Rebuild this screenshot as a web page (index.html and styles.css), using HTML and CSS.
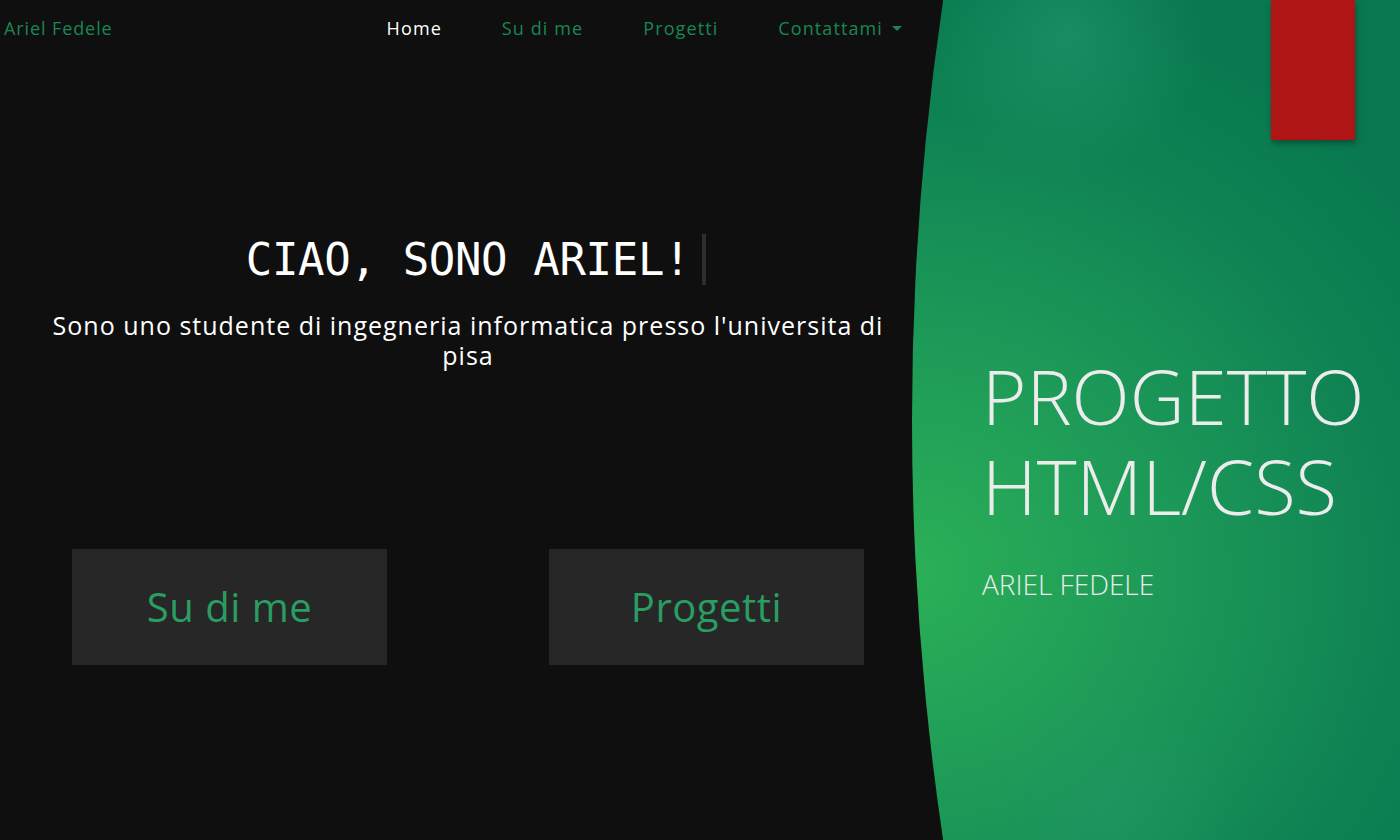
FILE: index.html
```html
<!DOCTYPE html>
<html lang="it">
<head>
<meta charset="utf-8">
<title>Ariel Fedele</title>
<link rel="stylesheet" href="styles.css">
</head>
<body>
<div class="page">
  <div class="main">
    <nav class="navbar">
      <a class="brand" href="#">Ariel Fedele</a>
      <ul class="nav-links">
        <li><a class="nav-link active" href="#">Home</a></li>
        <li><a class="nav-link" href="#">Su di me</a></li>
        <li><a class="nav-link" href="#">Progetti</a></li>
        <li><a class="nav-link dropdown" href="#">Contattami</a></li>
      </ul>
    </nav>
    <section class="hero">
      <h1 class="hero-title"><span class="typing">CIAO, SONO ARIEL!</span></h1>
      <p class="hero-text">Sono uno studente di ingegneria informatica presso l'universita di pisa</p>
      <div class="hero-buttons">
        <a class="big-btn" href="#">Su di me</a>
        <a class="big-btn" href="#">Progetti</a>
      </div>
    </section>
  </div>
  <div class="visual">
    <div class="ribbon"></div>
    <div class="visual-text">
      <div class="visual-line">PROGETTO</div>
      <div class="visual-line">HTML/CSS</div>
      <div class="visual-sub">ARIEL FEDELE</div>
    </div>
  </div>
</div>
</body>
</html>
```
FILE: styles.css
```css
html, body {
  margin: 0;
  padding: 0;
  background: #0f0f0f;
  overflow: hidden;
}
body {
  font-family: "Open Sans", "Noto Sans", sans-serif;
  color: #ffffff;
}
a { text-decoration: none; }

.page {
  display: flex;
  width: 1400px;
  height: 840px;
}

.main {
  width: 936px;
  flex: 0 0 936px;
  display: flex;
  flex-direction: column;
}

.navbar {
  height: 56px;
  display: flex;
  align-items: center;
  padding: 0 4px;
}
.brand {
  color: #198754;
  font-size: 18px;
  letter-spacing: 0.9px;
}
.nav-links {
  list-style: none;
  margin: 0 0 0 auto;
  padding: 0;
  display: flex;
}
.nav-link {
  display: block;
  padding: 0 30px;
  font-size: 18px;
  letter-spacing: 1.1px;
  color: #198754;
}
.nav-link.active { color: #ffffff; }
.dropdown::after {
  content: "";
  display: inline-block;
  margin-left: 9px;
  vertical-align: 4px;
  border-top: 5px solid #198754;
  border-left: 5px solid transparent;
  border-right: 5px solid transparent;
}

.hero {
  display: flex;
  flex-direction: column;
  align-items: center;
  padding-top: 178px;
}
.hero-title {
  margin: 0 0 0 16px;
  font-family: "DejaVu Sans Mono", monospace;
  font-weight: 400;
  font-size: 44px;
  letter-spacing: -0.35px;
  line-height: 1.2;
  color: #ffffff;
}
.typing {
  padding-right: 12px;
  border-right: 4px solid #2e2e2e;
}
.hero-text {
  margin: 23px 0 0;
  width: 870px;
  text-align: center;
  font-size: 25px;
  letter-spacing: 1px;
  line-height: 30px;
}
.hero-buttons {
  margin-top: 179px;
  display: flex;
  gap: 162px;
}
.big-btn {
  width: 315px;
  height: 116px;
  background: #272727;
  color: #2a9d63;
  font-size: 40px;
  letter-spacing: 0.5px;
  display: flex;
  align-items: center;
  justify-content: center;
}

.visual {
  flex: 1;
  margin-left: -24px;
  position: relative;
  clip-path: circle(2845px at 2845px 420px);
  background:
    radial-gradient(circle 140px at 155px 35px, rgba(50, 165, 125, 0.4), rgba(50, 165, 125, 0)),
    radial-gradient(circle 120px at 200px 810px, rgba(40, 150, 110, 0.35), rgba(40, 150, 110, 0)),
    radial-gradient(ellipse 640px 600px at 0% 68%, #2bb057 0%, #21a058 28%, #189257 52%, #0f8253 76%, #09784f 100%);
}
.ribbon {
  position: absolute;
  left: 359px;
  top: 0;
  width: 84px;
  height: 140px;
  background: #b01515;
  box-shadow: 1px 3px 6px rgba(0, 0, 0, 0.35);
}
.visual-text {
  padding: 351px 0 0 70px;
  color: #ececec;
}
.visual-line {
  font-size: 76px;
  font-weight: 300;
  line-height: 90px;
  height: 90px;
}
.visual-sub {
  margin-top: 34px;
  font-size: 28px;
  font-weight: 300;
  line-height: 38px;
}
```
